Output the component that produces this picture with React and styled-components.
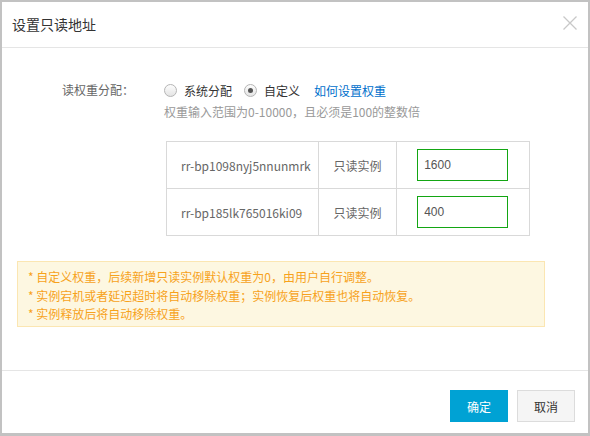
import React from "react";
import styled, { createGlobalStyle } from "styled-components";

const Global = createGlobalStyle`
  html, body { margin: 0; padding: 0; background: #fff; }
  body { font-family: "Liberation Sans", "Noto Sans CJK SC", sans-serif; font-size: 12px; }
  * { box-sizing: border-box; }
`;

const Frame = styled.div`
  width: 590px;
  height: 436px;
  border: 2px solid #c2c2c2;
  border-bottom-width: 3px;
  background: #fff;
  display: flex;
  flex-direction: column;
`;

const Header = styled.div`
  height: 46px;
  flex: none;
  border-bottom: 1px solid #e5e5e5;
  display: flex;
  align-items: center;
  justify-content: space-between;
  padding: 0 10px 0 10px;
`;

const Title = styled.div`
  font-size: 14px;
  color: #333;
  font-family: "Noto Sans CJK SC", sans-serif;
  margin-top: -1px;
`;

const Close = styled.svg`
  width: 16px;
  height: 16px;
  margin-top: -4px;
`;

const Body = styled.div`
  flex: 1;
  padding: 33px 0 0 15px;
  display: flex;
  flex-direction: column;
`;

const FormGrid = styled.div`
  display: grid;
  grid-template-columns: 102px auto;
  padding-left: 45px;
`;

const Label = styled.div`
  color: #666;
  line-height: 18px;
  font-family: "Noto Sans CJK SC", sans-serif;
`;

const Field = styled.div`
  display: flex;
  flex-direction: column;
`;

const RadioRow = styled.div`
  display: flex;
  align-items: center;
  height: 18px;
  color: #333;
  font-family: "Noto Sans CJK SC", sans-serif;
`;

const RadioItem = styled.label`
  display: flex;
  align-items: center;
  margin-right: ${(p) => p.$gap || 0}px;
`;

const RadioCircle = styled.span`
  width: 13px;
  height: 13px;
  border-radius: 50%;
  border: 1px solid #b5b5b5;
  background: linear-gradient(#fdfdfd, #e4e4e4);
  display: inline-flex;
  align-items: center;
  justify-content: center;
  margin-right: 7px;
  &::after {
    content: "";
    width: 5px;
    height: 5px;
    border-radius: 50%;
    background: ${(p) => (p.$checked ? "#555" : "transparent")};
  }
`;

const Link = styled.a`
  color: #0070cc;
  text-decoration: none;
  cursor: pointer;
`;

const Hint = styled.div`
  color: #999;
  line-height: 18px;
  margin-top: 4px;
  font-family: "Noto Sans CJK SC", sans-serif;
`;

const Table = styled.table`
  border-collapse: collapse;
  width: 364px;
  margin-top: 20px;
  margin-left: 2px;
  color: #666;
`;

const Td = styled.td`
  border: 1px solid #d9d9d9;
  height: 47px;
  text-align: ${(p) => p.$align || "center"};
  width: ${(p) => p.$w}px;
  padding: 0 0 0 ${(p) => p.$pl || 0}px;
  font-family: "Noto Sans CJK SC", sans-serif;
`;

const Input = styled.input`
  width: 91px;
  height: 32px;
  border: 1px solid #13a613;
  outline: none;
  padding: 0 6px;
  font-size: 12px;
  color: #555;
  font-family: "Liberation Sans", "Noto Sans CJK SC", sans-serif;
  display: block;
`;

const Notice = styled.div`
  margin-top: 25px;
  width: 528px;
  height: 66px;
  background: #fdf7e1;
  border: 1px solid #fbe6b2;
  padding: 6px 0 0 10px;
  color: #f7a21b;
  font-family: "Noto Sans CJK SC", sans-serif;
  line-height: 18.5px;
`;

const Footer = styled.div`
  height: 63px;
  flex: none;
  border-top: 1px solid #e5e5e5;
  display: flex;
  justify-content: flex-end;
  align-items: flex-start;
  gap: 9px;
  padding: 19px 13px 0 0;
`;

const Button = styled.button`
  width: ${(p) => p.$w}px;
  height: 32px;
  font-size: 12px;
  font-family: "Noto Sans CJK SC", sans-serif;
  border: 1px solid ${(p) => (p.$primary ? "#00a2d4" : "#dcdcdc")};
  background: ${(p) => (p.$primary ? "#00a2d4" : "#f5f5f5")};
  color: ${(p) => (p.$primary ? "#fff" : "#333")};
  cursor: pointer;
  padding: 0;
`;

const rows = [
  { id: "rr-bp1098nyj5nnunmrk", weight: "1600" },
  { id: "rr-bp185lk765016ki09", weight: "400" },
];

export default function App() {
  return (
    <>
      <Global />
      <Frame>
        <Header>
          <Title>设置只读地址</Title>
          <Close viewBox="0 0 16 16">
            <path d="M1.5 1.5 L14.5 14.5 M14.5 1.5 L1.5 14.5" stroke="#c8c8c8" strokeWidth="1.3" fill="none" />
          </Close>
        </Header>
        <Body>
          <FormGrid>
            <Label>读权重分配：</Label>
            <Field>
              <RadioRow>
                <RadioItem $gap={12}>
                  <RadioCircle />
                  系统分配
                </RadioItem>
                <RadioItem $gap={14}>
                  <RadioCircle $checked />
                  自定义
                </RadioItem>
                <Link>如何设置权重</Link>
              </RadioRow>
              <Hint>权重输入范围为0-10000，且必须是100的整数倍</Hint>
              <Table>
                <tbody>
                  {rows.map((r) => (
                    <tr key={r.id}>
                      <Td $w={152} $align="left" $pl={14}>{r.id}</Td>
                      <Td $w={79}>只读实例</Td>
                      <Td $w={133} $align="left" $pl={20}>
                        <Input defaultValue={r.weight} />
                      </Td>
                    </tr>
                  ))}
                </tbody>
              </Table>
            </Field>
          </FormGrid>
          <Notice>
            <div>* 自定义权重，后续新增只读实例默认权重为0，由用户自行调整。</div>
            <div>* 实例宕机或者延迟超时将自动移除权重；实例恢复后权重也将自动恢复。</div>
            <div>* 实例释放后将自动移除权重。</div>
          </Notice>
        </Body>
        <Footer>
          <Button $primary $w={58}>确定</Button>
          <Button $w={58}>取消</Button>
        </Footer>
      </Frame>
    </>
  );
}
